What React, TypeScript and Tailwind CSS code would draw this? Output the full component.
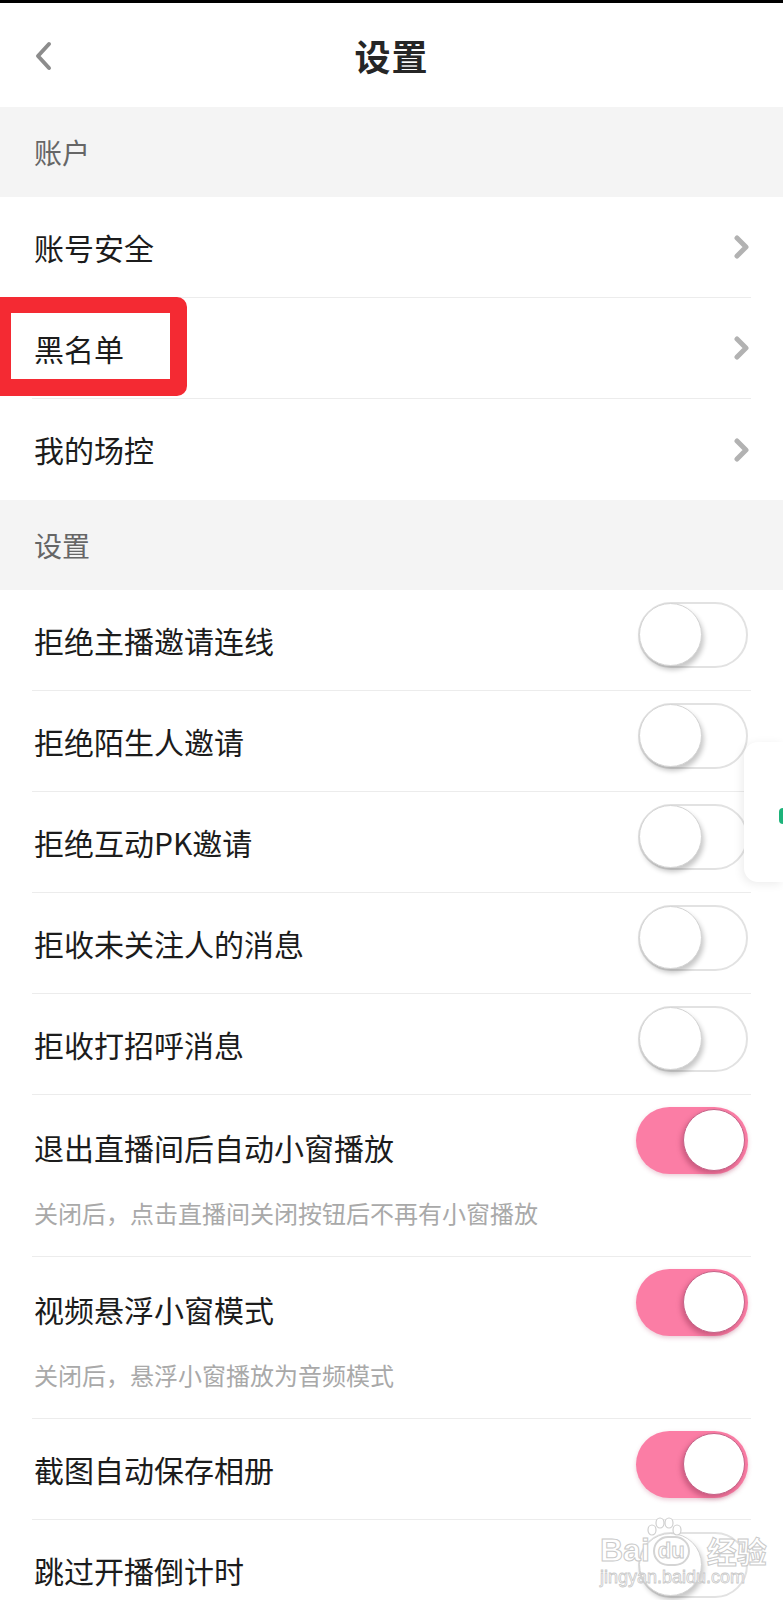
import React from 'react';

const Chevron: React.FC = () => (
  <svg width="18" height="24" viewBox="0 0 18 24" className="shrink-0">
    <path d="M4 3 L13 12 L4 21" fill="none" stroke="#b2b2b2" strokeWidth="5" strokeLinecap="round" strokeLinejoin="round" />
  </svg>
);

const Toggle: React.FC<{ on?: boolean }> = ({ on }) =>
  on ? (
    <div className="relative w-[112px] h-[67px] rounded-full bg-[#fb7da5] shrink-0 mb-[10px] shadow-[0_2px_4px_rgba(180,60,100,0.25)]">
      <div className="absolute right-[3px] top-[2px] size-[62px] rounded-full bg-white border border-[#c56287] shadow-[-2px_3px_5px_rgba(120,30,60,0.35)]"></div>
    </div>
  ) : (
    <div className="relative w-[110px] h-[66px] rounded-full bg-white border-2 border-[#e2e2e2] shrink-0 mb-[10px]">
      <div className="absolute -left-[1px] -top-[1px] size-[63px] rounded-full bg-white border border-[#d4d4d4] shadow-[2px_4px_5px_rgba(0,0,0,0.22)]"></div>
    </div>
  );

const SectionHeader: React.FC<{ label: string }> = ({ label }) => (
  <div className="h-[90px] bg-[#f4f4f4] flex items-center px-[34px] text-[28px] text-[#666]">{label}</div>
);

const LinkRow: React.FC<{ label: string; last?: boolean }> = ({ label, last }) => (
  <div className="mx-[32px]">
    <div className={`h-[101px] flex items-center justify-between ${last ? '' : 'border-b border-[#ececec]'}`}>
      <span className="text-[30px] text-[#1c1c1c] pl-[2px]">{label}</span>
      <Chevron />
    </div>
  </div>
);

const ToggleRow: React.FC<{ label: string; on?: boolean; note?: string }> = ({ label, on, note }) => (
  <div className="mx-[32px] border-b border-[#ececec]">
    <div className={`${note ? 'h-[104px]' : 'h-[100px]'} flex items-center justify-between`}>
      <span className="text-[30px] text-[#1c1c1c] pl-[2px]">{label}</span>
      <div className={note ? 'mb-[4px] mr-[3px]' : 'mr-[3px]'}>
        <Toggle on={on} />
      </div>
    </div>
    {note && <div className="text-[24px] leading-[28px] text-[#a9a9a9] pl-[2px] pb-[29px]">{note}</div>}
  </div>
);

export default function App() {
  return (
    <div className="relative w-[783px] h-[1600px] overflow-hidden bg-white font-['Noto_Sans_CJK_SC','Noto_Sans',sans-serif]">
      <div className="h-[3px] bg-black"></div>

      {/* Header */}
      <div className="relative h-[104px] flex items-center justify-center">
        <svg width="22" height="32" viewBox="0 0 22 32" className="absolute left-[33px] top-[38px]">
          <path d="M16 3 L5 15 L16 27" fill="none" stroke="#8c8c8c" strokeWidth="4" strokeLinecap="round" strokeLinejoin="round" />
        </svg>
        <h1 className="text-[36px] font-bold text-[#262626] tracking-[1px]">设置</h1>
      </div>

      <SectionHeader label="账户" />
      <LinkRow label="账号安全" />
      <LinkRow label="黑名单" />
      <LinkRow label="我的场控" last />

      <SectionHeader label="设置" />
      <ToggleRow label="拒绝主播邀请连线" />
      <ToggleRow label="拒绝陌生人邀请" />
      <ToggleRow label="拒绝互动PK邀请" />
      <ToggleRow label="拒收未关注人的消息" />
      <ToggleRow label="拒收打招呼消息" />
      <ToggleRow label="退出直播间后自动小窗播放" on note="关闭后，点击直播间关闭按钮后不再有小窗播放" />
      <ToggleRow label="视频悬浮小窗模式" on note="关闭后，悬浮小窗播放为音频模式" />
      <ToggleRow label="截图自动保存相册" on />
      <ToggleRow label="跳过开播倒计时" />

      {/* Red highlight annotation */}
      <div className="absolute left-0 top-[297px] w-[187px] h-[99px] border-[#f42a33] border-t-[16px] border-b-[17px] border-l-[11px] border-r-[17px] rounded-r-[10px]"></div>

      {/* Floating side card */}
      <div className="absolute right-0 top-[742px] w-[39px] h-[140px] bg-white rounded-l-[14px] shadow-[-2px_2px_10px_rgba(0,0,0,0.08)] flex items-center">
        <div className="ml-[35px] mt-[8px] w-[4px] h-[16px] rounded-l-full bg-[#1db37a]"></div>
      </div>

      {/* Watermark */}
      <div className="absolute left-[600px] top-[1516px] flex flex-col items-start pointer-events-none">
        <svg width="40" height="22" viewBox="0 0 40 22" className="ml-[44px] -mb-[4px]">
          <g fill="white" stroke="#cfcfcf" strokeWidth="1.2">
            <ellipse cx="8" cy="14" rx="4" ry="5" />
            <ellipse cx="16" cy="7" rx="4" ry="5" />
            <ellipse cx="25" cy="7" rx="4" ry="5" />
            <ellipse cx="33" cy="14" rx="4" ry="5" />
          </g>
        </svg>
        <div className="flex items-end gap-[3px] text-white [-webkit-text-stroke:1px_#c9c9c9] font-['Liberation_Sans',sans-serif] font-bold">
          <span className="text-[32px] leading-[32px]">Bai</span>
          <span className="text-[22px] leading-[26px] px-[3px] rounded-full border-2 border-[#d4d4d4]">du</span>
          <span className="text-[30px] leading-[32px] ml-[14px] font-['Noto_Sans_CJK_SC',sans-serif]">经验</span>
        </div>
        <div className="text-[18px] leading-[22px] text-white [-webkit-text-stroke:0.8px_#c9c9c9] font-['Liberation_Sans',sans-serif]">jingyan.baidu.com</div>
      </div>
    </div>
  );
}
